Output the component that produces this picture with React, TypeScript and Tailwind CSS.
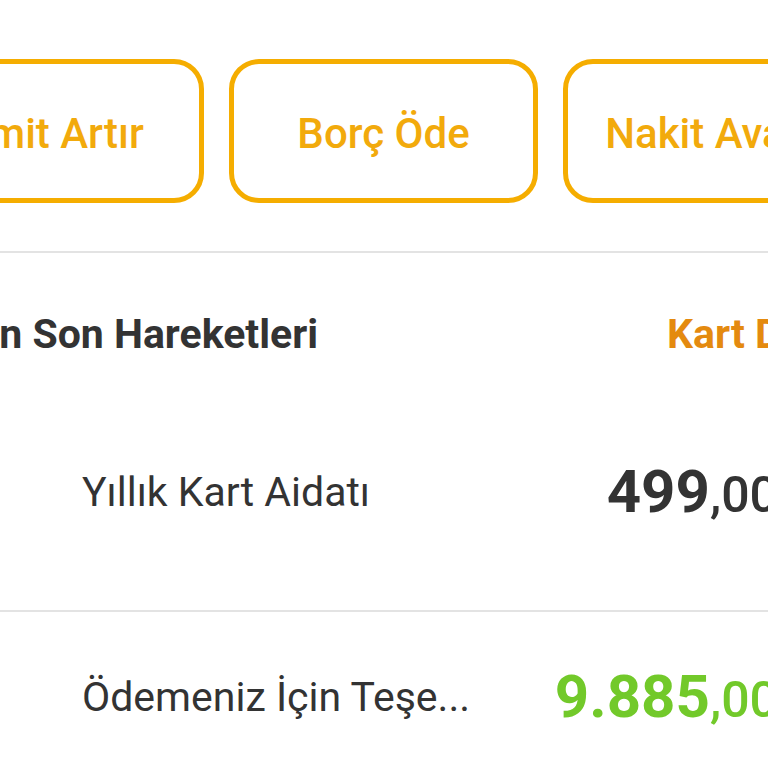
import React from "react";

const font = { fontFamily: "Roboto, 'Noto Sans', sans-serif" };

function ActionButton({ label }: { label: string }) {
  return (
    <div className="w-[309px] h-[144px] shrink-0 rounded-[30px] border-[5px] border-[#f5ad00] flex items-center justify-center pt-[5px]">
      <span className="text-[42px] leading-none font-medium text-[#f2aa0c] whitespace-nowrap">{label}</span>
    </div>
  );
}

function Amount({ int, dec, color }: { int: string; dec: string; color: string }) {
  return (
    <div className={`flex items-baseline whitespace-nowrap ${color}`}>
      <span className="text-[60px] leading-none font-bold">{int}</span>
      <span className="text-[50px] leading-none font-medium">{dec}</span>
    </div>
  );
}

export default function App() {
  return (
    <div className="w-[768px] h-[768px] overflow-hidden bg-white relative" style={font}>
      <div className="pt-[59px] flex gap-[25px] ml-[-105px]">
        <ActionButton label="Limit Artır" />
        <ActionButton label="Borç Öde" />
        <ActionButton label="Nakit Avans" />
      </div>
      <div className="mt-[48px] h-[2px] bg-[#e3e3e3] w-full" />
      <div className="mt-[61px] flex items-center w-[900px]">
        <div className="w-[318px] flex justify-end">
          <span className="text-[41px] leading-none font-bold text-[#333333] whitespace-nowrap">Kartın Son Hareketleri</span>
        </div>
        <span className="ml-[349px] text-[41px] leading-none font-bold text-[#e48a0f] whitespace-nowrap">Kart Detayları</span>
      </div>
      <div className="pt-[107px] pb-[88px] flex items-center justify-between w-[778px] h-[255px]">
        <span className="ml-[82px] text-[41px] leading-none text-[#333333] whitespace-nowrap">Yıllık Kart Aidatı</span>
        <Amount int="499" dec=",00" color="text-[#333333]" />
      </div>
      <div className="h-[2px] bg-[#e3e3e3] w-full" />
      <div className="pt-[55px] flex items-center justify-between w-[778px]">
        <span className="ml-[82px] text-[41px] leading-none text-[#333333] whitespace-nowrap">Ödemeniz İçin Teşe...</span>
        <Amount int="9.885" dec=",00" color="text-[#72c92a]" />
      </div>
    </div>
  );
}
